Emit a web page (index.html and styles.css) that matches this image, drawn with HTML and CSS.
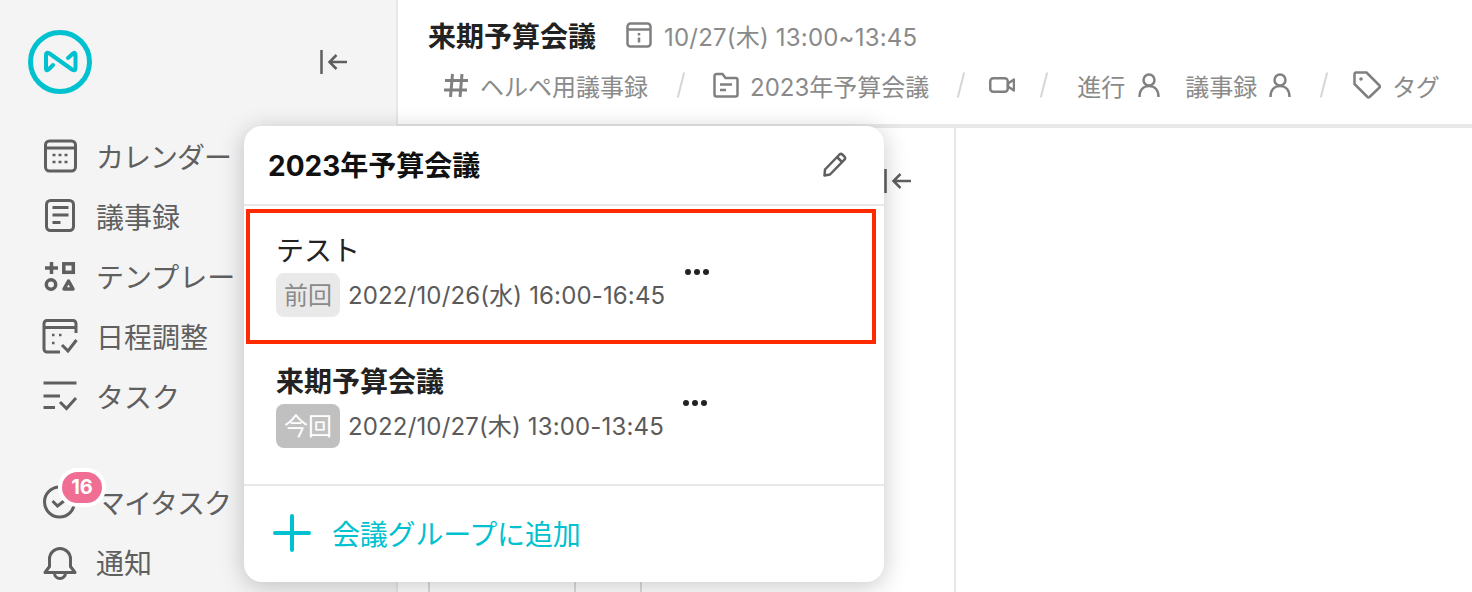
FILE: index.html
```html
<!DOCTYPE html>
<html lang="ja">
<head>
    <title>来期予算会議</title>
    <link rel="stylesheet" href="styles.css">
</head>
<body>
    <div class="app">
        <aside class="sidebar">
            <div class="brand">
                <svg class="logo" width="64" height="64" viewBox="0 0 64 64" fill="none">
                    <circle cx="32" cy="32" r="29.500" stroke-width="5"/>
                    <path d="M25 35 20.500 39.500Q18 41.500 18 38.500V25Q18 21.500 21.500 23.500L44 39.500Q47.500 41.500 47.500 38V25Q47.500 21.500 45 23.500L40 28" stroke-width="4" stroke-linecap="round" stroke-linejoin="round"/>
                </svg>
                <svg class="collapse" width="28" height="24" viewBox="0 0 28 24" fill="none">
                    <path d="M1.500 0V24M27 12H9.500M16.500 5 9.500 12l7 7" stroke-width="2.500"/>
                </svg>
            </div>
            <nav class="nav">
                <a class="nav-item nav-kana">
                    <svg class="nav-icon" viewBox="0 0 36 36" fill="none">
                        <rect x="3.500" y="3" width="30" height="30" rx="4" stroke-width="3"/>
                        <path d="M3.500 10h30" stroke-width="3"/>
                        <path d="M10.500 17h3M16.500 17h3M22.500 17h3M10.500 24h3M16.500 24h3M22.500 24h3" stroke-width="2.500"/>
                    </svg>
                    カレンダー
                </a>
                <a class="nav-item">
                    <svg class="nav-icon" viewBox="0 0 36 36" fill="none">
                        <rect x="4.500" y="2.500" width="27" height="30" rx="4" stroke-width="3"/>
                        <path d="M10.500 9.500h16M10.500 17h16M10.500 24.500h8" stroke-width="3"/>
                    </svg>
                    議事録
                </a>
                <a class="nav-item">
                    <svg class="nav-icon" viewBox="0 0 36 36" fill="none">
                        <path d="M9.500 4v12M3 10h13" stroke-width="3.500"/>
                        <rect x="21.800" y="5.800" width="9.500" height="8.500" stroke-width="3.500"/>
                        <circle cx="9" cy="26.500" r="4.700" stroke-width="3.500"/>
                        <path d="M26.500 23 31 31H22z" stroke-width="3.500" stroke-linejoin="round"/>
                    </svg>
                    テンプレート
                </a>
                <a class="nav-item">
                    <svg class="nav-icon" viewBox="0 0 36 36" fill="none">
                        <path d="M18 34H5a3 3 0 0 1-3-3V5.500a3 3 0 0 1 3-3h26a3 3 0 0 1 3 3V15" stroke-width="3"/>
                        <path d="M2 9.500h32" stroke-width="3"/>
                        <path d="M10 17h2.500M17 17h2.500M10 25h2.500" stroke-width="2.500"/>
                        <path d="M20 27l6 6 8.500-11" stroke-width="3"/>
                    </svg>
                    日程調整
                </a>
                <a class="nav-item">
                    <svg class="nav-icon" viewBox="0 0 36 36" fill="none">
                        <path d="M1.500 5h33M1.500 18H18M1.500 29.500H13" stroke-width="3"/>
                        <path d="M18 24l6.500 6.500 9.500-10.500" stroke-width="3"/>
                    </svg>
                    タスク
                </a>
            </nav>
            <nav class="nav nav-bottom">
                <a class="nav-item nav-kana nav-mytask">
                    <svg class="nav-icon" viewBox="0 0 36 36" fill="none">
                        <circle cx="17.500" cy="18" r="15" stroke-width="3"/>
                        <path d="M10.500 17l5 5 6.500-5" stroke-width="3"/>
                    </svg>
                    マイタスク
                    <span class="count">16</span>
                </a>
                <a class="nav-item">
                    <svg class="nav-icon" viewBox="0 0 36 36" fill="none">
                        <path d="M3 28.500h30l-4.500-6V15a10.500 10.500 0 0 0-21 0v7.500z" stroke-width="3" stroke-linejoin="round"/>
                        <path d="M12.500 29a5.500 5.500 0 0 0 11 0" stroke-width="3"/>
                    </svg>
                    通知
                </a>
            </nav>
        </aside>

        <main class="main">
            <header class="header">
                <div class="title-row">
                    <h1 class="title">来期予算会議</h1>
                    <svg class="title-icon" width="26" height="26" viewBox="0 0 26 26" fill="none">
                        <rect x="1.500" y="1.500" width="23" height="23" rx="3" stroke-width="2.500"/>
                        <path d="M1.500 7.500h23M13 11v2.500M13 15.500v5" stroke-width="2.500"/>
                    </svg>
                    <span class="date">10/27(木) 13:00~13:45</span>
                </div>
                <div class="meta-row">
                    <svg class="hash" width="24" height="26" viewBox="0 0 24 26" fill="none">
                        <path d="M8.500 2 6.500 25M18 2l-2 23M1 8.500h23M0 18h23" stroke-width="3"/>
                    </svg>
                    <span class="meta-text">ヘルペ用議事録</span>
                    <span class="slash"></span>
                    <svg class="folder" width="26" height="26" viewBox="0 0 26 26" fill="none">
                        <path d="M1.500 4a2 2 0 0 1 2-2h6l3 4h10a2 2 0 0 1 2 2v14.500a2 2 0 0 1-2 2h-19a2 2 0 0 1-2-2z" stroke-width="2.500"/>
                        <path d="M7 12.500h12M7 18h6" stroke-width="2.500"/>
                    </svg>
                    <span class="meta-text">2023年予算会議</span>
                    <span class="slash slash-video"></span>
                    <svg class="video" width="26" height="18" viewBox="0 0 26 18" fill="none">
                        <rect x="1.250" y="2.250" width="17.500" height="13.500" rx="3" stroke-width="2.500"/>
                        <path d="M19 7.500 25 3.500v11l-6-4z" stroke-width="2.500" stroke-linejoin="round"/>
                    </svg>
                    <span class="slash slash-roles"></span>
                    <span class="meta-text role-first">進行</span>
                    <svg class="person" width="22" height="24" viewBox="0 0 22 24" fill="none">
                        <circle cx="11" cy="7" r="5.500" stroke-width="2.500"/>
                        <path d="M1.500 24c0-6.500 3.500-11 9.500-11s9.500 4.500 9.500 11" stroke-width="2.500"/>
                    </svg>
                    <span class="meta-text role-second">議事録</span>
                    <svg class="person" width="22" height="24" viewBox="0 0 22 24" fill="none">
                        <circle cx="11" cy="7" r="5.500" stroke-width="2.500"/>
                        <path d="M1.500 24c0-6.500 3.500-11 9.500-11s9.500 4.500 9.500 11" stroke-width="2.500"/>
                    </svg>
                    <span class="slash slash-tag"></span>
                    <svg class="tag" width="28" height="28" viewBox="0 0 28 28" fill="none">
                        <path d="M1.500 3a1.500 1.500 0 0 1 1.500-1.500h10.500L26.500 14.500a1.500 1.500 0 0 1 0 2L16.500 26a1.500 1.500 0 0 1-2 0L1.500 13z" stroke-width="2.500" stroke-linejoin="round"/>
                        <circle cx="8" cy="8" r="1.800" class="dot"/>
                    </svg>
                    <span class="meta-text tag-text">タグ</span>
                </div>
            </header>
            <div class="body">
                <section class="panel">
                    <div class="panel-top">
                        <svg class="collapse" width="28" height="24" viewBox="0 0 28 24" fill="none">
                            <path d="M1.500 0V24M27 12H9.500M16.500 5 9.500 12l7 7" stroke-width="2.500"/>
                        </svg>
                    </div>
                    <div class="table-strip">
                        <div class="cell cell-a"></div>
                        <div class="cell cell-b"></div>
                        <div class="cell"></div>
                    </div>
                </section>
                <section class="editor"></section>
            </div>
        </main>
    </div>

    <div class="popup">
        <div class="popup-head">
            <h2 class="popup-title">2023年予算会議</h2>
            <svg class="pencil" width="26" height="26" viewBox="0 0 26 26" fill="none">
                <path d="M3 18.500 17.500 3.500a2 2 0 0 1 2.800 0l2.200 2.200a2 2 0 0 1 0 2.800L8 23.500l-5.500 1z" stroke-width="2.500" stroke-linejoin="round"/>
                <path d="M15 6l5.500 5.500" stroke-width="2.500"/>
            </svg>
        </div>
        <div class="meetings">
            <div class="meeting">
                <div class="meeting-info">
                    <div class="meeting-name">テスト</div>
                    <div class="meeting-when">
                        <span class="chip chip-prev">前回</span>
                        2022/10/26(水) 16:00-16:45
                    </div>
                </div>
                <div class="dots"><i></i><i></i><i></i></div>
            </div>
            <div class="meeting meeting-current">
                <div class="meeting-info">
                    <div class="meeting-name">来期予算会議</div>
                    <div class="meeting-when">
                        <span class="chip chip-now">今回</span>
                        2022/10/27(木) 13:00-13:45
                    </div>
                </div>
                <div class="dots"><i></i><i></i><i></i></div>
            </div>
        </div>
        <div class="popup-foot">
            <svg width="38" height="38" viewBox="0 0 38 38" fill="none">
                <path d="M19 2v34M2 19h34" stroke-width="4" stroke-linecap="round"/>
            </svg>
            <span>会議グループに追加</span>
        </div>
    </div>
    <div class="highlight"></div>
</body>
</html>
```

FILE: styles.css
```css
* {
    box-sizing: border-box;
}
body {
    font-family: Inter, "Noto Sans CJK JP", sans-serif;
    margin: 0;
    width: 1472px;
    height: 592px;
    overflow: hidden;
    position: relative;
    background: #fff;
}
.app {
    display: flex;
    height: 592px;
}

/* sidebar */
.sidebar {
    width: 398px;
    flex-shrink: 0;
    height: 592px;
    background: #f4f4f4;
    border-right: 2px solid #e8e8e8;
    overflow: hidden;
}
.brand {
    display: flex;
    justify-content: space-between;
    align-items: flex-start;
    padding: 30px 48px 0 28px;
    height: 126px;
}
.brand .collapse {
    margin-top: 20px;
}
.logo {
    stroke: #00c1cf;
}
.collapse {
    stroke: #5f5f5f;
}
.nav-bottom {
    margin-top: 46px;
}
.nav-item {
    display: flex;
    align-items: center;
    gap: 18px;
    height: 60px;
    padding-left: 42px;
    font-size: 28px;
    color: #5f5f5f;
    white-space: nowrap;
    position: relative;
}
.nav-kana {
    letter-spacing: -1px;
}
.nav-mytask {
    gap: 19px;
}
.nav-icon {
    width: 36px;
    height: 36px;
    flex-shrink: 0;
    stroke: #5f5f5f;
}
.count {
    position: absolute;
    left: 58px;
    top: -4px;
    width: 48px;
    height: 39px;
    border: 4px solid #fff;
    border-radius: 20px;
    background: #f06e93;
    color: #fff;
    font-size: 20px;
    font-weight: 700;
    letter-spacing: 0;
    line-height: 31px;
    text-align: center;
}

/* main */
.main {
    flex: 1;
    display: flex;
    flex-direction: column;
    min-width: 0;
}
.header {
    height: 128px;
    border-bottom: 4px solid #e8e8e8;
    padding: 15px 0 0 30px;
}
.title-row {
    display: flex;
    align-items: center;
    height: 40px;
}
.title {
    margin: 0;
    font-size: 28px;
    font-weight: 700;
    color: #222;
}
.title-icon {
    margin-left: 30px;
    stroke: #808080;
}
.date {
    margin-left: 12px;
    font-size: 24px;
    letter-spacing: 0.2px;
    color: #8a8a8a;
}
.meta-row {
    display: flex;
    align-items: center;
    height: 40px;
    margin-top: 10px;
    padding-left: 16px;
    font-size: 24px;
    color: #8a8a8a;
    white-space: nowrap;
}
.meta-row svg {
    flex-shrink: 0;
    stroke: #808080;
}
.tag .dot {
    fill: #808080;
    stroke: none;
}
.meta-row .hash {
    margin-right: 12px;
}
.slash {
    width: 2px;
    height: 26px;
    margin: 0 31px 0 32px;
    background: #d6d6d6;
    transform: rotate(14deg);
}
.slash-video {
    margin: 0 27px 0 31px;
}
.slash-roles {
    margin: 0 28px 0 28px;
}
.slash-tag {
    margin: 0 28px 0 32px;
}
.folder {
    margin-right: 11px;
}
.role-first {
    margin-left: 4px;
    margin-right: 13px;
}
.role-second {
    margin-left: 25px;
    margin-right: 12px;
}
.tag-text {
    margin-left: 11px;
    letter-spacing: -0.5px;
}

/* body under the header */
.body {
    flex: 1;
    display: flex;
    min-height: 0;
}
.panel {
    width: 558px;
    display: flex;
    flex-direction: column;
    border-right: 2px solid #e8e8e8;
}
.panel-top {
    display: flex;
    justify-content: flex-end;
    padding: 41px 42px 0 0;
}
.table-strip {
    display: flex;
    margin: auto 0 0 30px;
    height: 17px;
}
.cell {
    border-left: 2px solid #dcdcdc;
    flex: 1;
}
.cell-a {
    flex: 0 0 146px;
}
.cell-b {
    flex: 0 0 66px;
}
.editor {
    flex: 1;
}

/* popup over the page */
.popup {
    position: absolute;
    left: 244px;
    top: 126px;
    width: 640px;
    height: 456px;
    background: #fff;
    border-radius: 18px;
    box-shadow: 0 4px 24px rgba(0, 0, 0, 0.22);
    display: flex;
    flex-direction: column;
}
.popup-head {
    height: 80px;
    flex-shrink: 0;
    display: flex;
    align-items: center;
    justify-content: space-between;
    padding: 0 36px 3px 24px;
    border-bottom: 2px solid #e8e8e8;
}
.popup-title {
    margin: 0;
    font-size: 28px;
    font-weight: 700;
    color: #111;
}
.pencil {
    stroke: #5f5f5f;
}
.meetings {
    height: 280px;
    flex-shrink: 0;
    border-bottom: 2px solid #e8e8e8;
    padding-top: 6px;
}
.meeting {
    display: flex;
    align-items: center;
    height: 131px;
    padding: 0 0 10px 32px;
}
.meeting-info {
    width: 409px;
}
.meeting-name {
    font-size: 28px;
    line-height: 44px;
    color: #222;
}
.meeting-current .meeting-name {
    font-weight: 700;
}
.meeting-current .dots {
    margin-left: -2px;
}
.meeting-when {
    display: flex;
    align-items: center;
    gap: 8px;
    margin-top: -2px;
    font-size: 24px;
    letter-spacing: 0.15px;
    color: #5a5a5a;
    white-space: nowrap;
}
.chip {
    width: 64px;
    height: 44px;
    margin-top: 2px;
    line-height: 46px;
    text-align: center;
    border-radius: 8px;
    letter-spacing: 0;
}
.chip-prev {
    background: #e9e9e9;
    color: #8a8a8a;
}
.chip-now {
    background: #c0c0c0;
    color: #fff;
}
.dots {
    display: flex;
    gap: 3px;
    margin-top: -2px;
}
.dots i {
    width: 6px;
    height: 6px;
    border-radius: 50%;
    background: #222;
}
.popup-foot {
    flex: 1;
    display: flex;
    align-items: center;
    gap: 21px;
    padding: 0 0 3px 29px;
    font-size: 28px;
    letter-spacing: -0.2px;
    color: #00c1cf;
}
.popup-foot svg {
    stroke: #00c1cf;
}

/* red annotation box */
.highlight {
    position: absolute;
    left: 246px;
    top: 209px;
    width: 630px;
    height: 135px;
    border: 4px solid #ff2a00;
}
```
